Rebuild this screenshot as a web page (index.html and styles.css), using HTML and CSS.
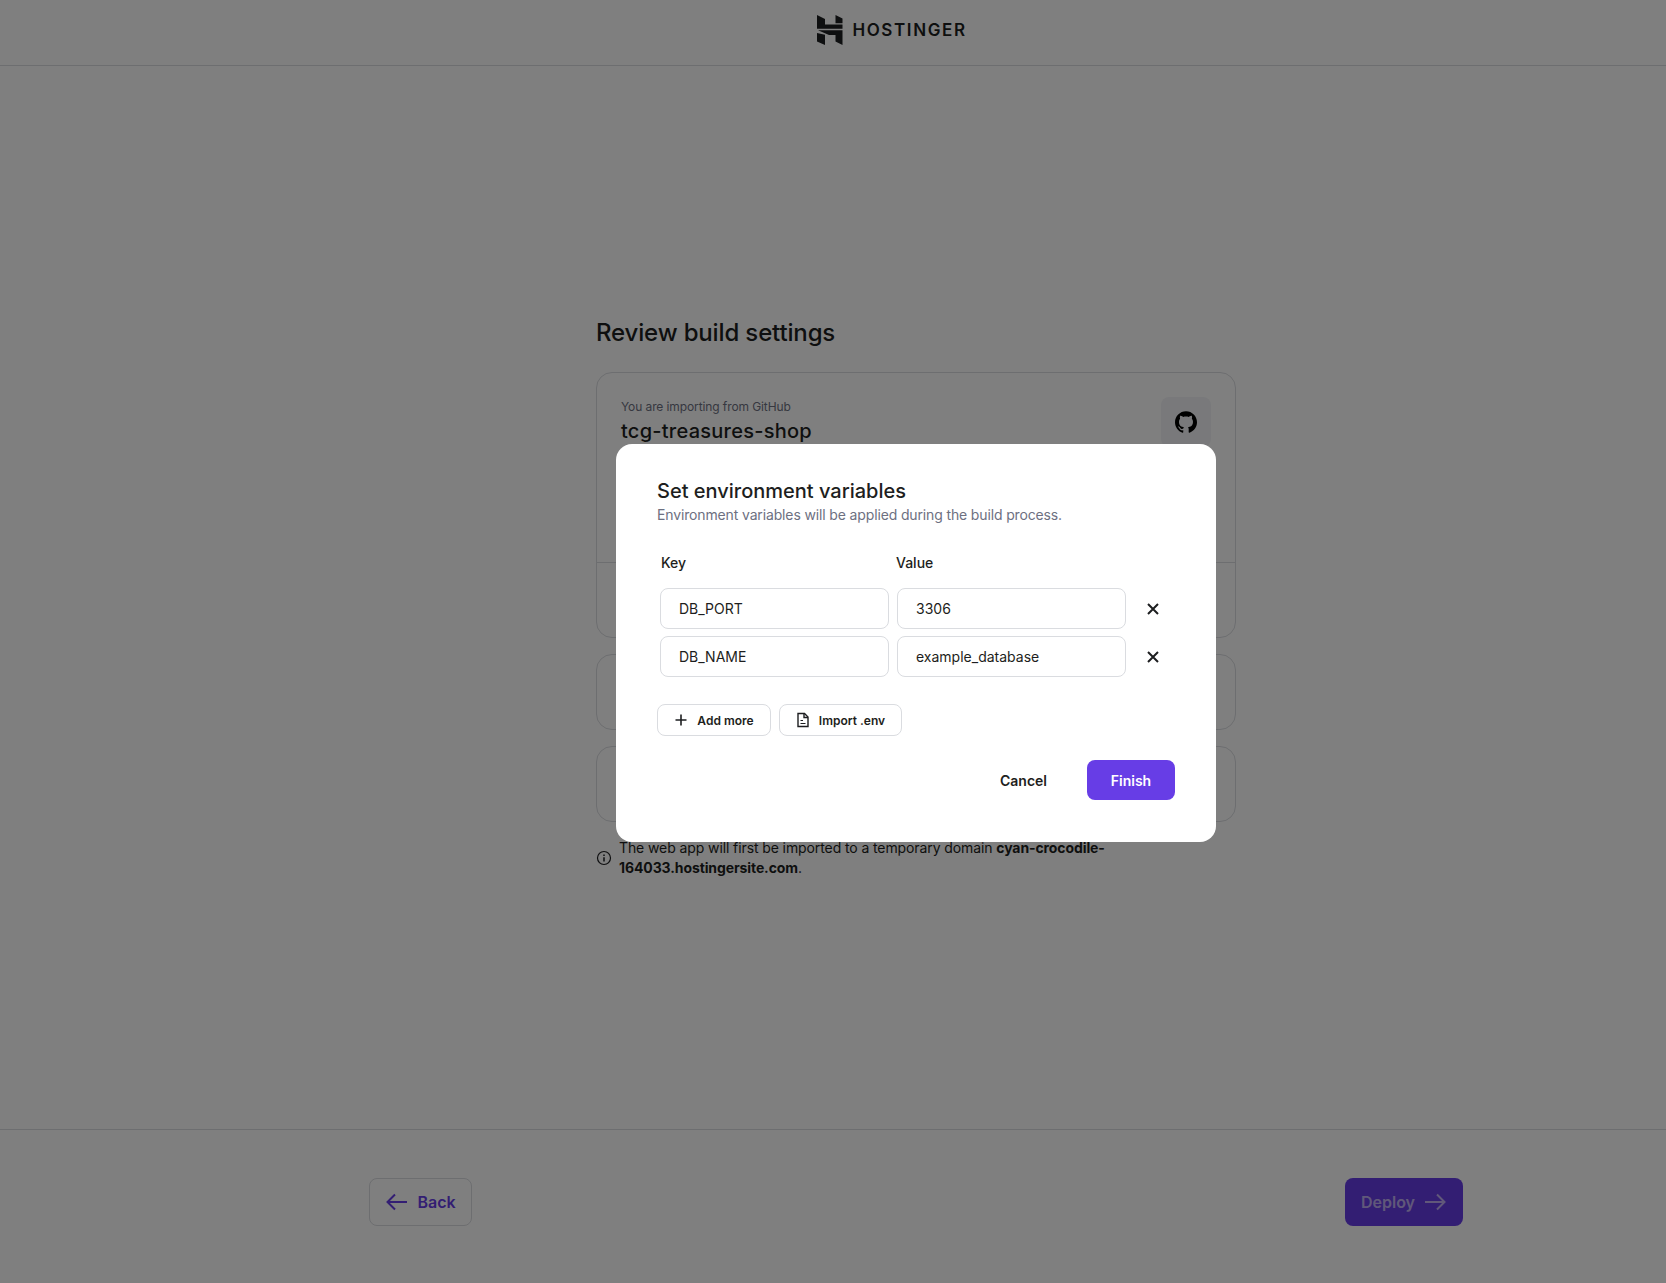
FILE: index.html
```html
<!DOCTYPE html>
<html lang="en">
<head>
    <meta charset="UTF-8">
    <title>Review build settings</title>
    <link rel="stylesheet" href="styles.css">
</head>
<body>
    <div class="page">
        <header class="topbar">
            <div class="logo">
                <svg class="logo-mark" width="26" height="30" viewBox="0 0 26 30">
                    <path d="M0 0L8 4V9.500H25.500V13.800H0Z"/>
                    <path d="M18.500 0L25.500 3.500V8.200H18.500Z"/>
                    <path d="M0 18L8 19.800V30L0 26.500Z"/>
                    <path d="M1 15.300H25.500V30L18.500 26.500V20H12Z"/>
                </svg>
                <span class="logo-text">HOSTINGER</span>
            </div>
        </header>

        <main class="content">
            <div class="column">
                <h1>Review build settings</h1>

                <section class="card">
                    <div class="card-top">
                        <div>
                            <p class="source">You are importing from GitHub</p>
                            <p class="repo">tcg-treasures-shop</p>
                        </div>
                        <div class="github-box">
                            <svg width="22" height="22" viewBox="0 0 24 24">
                                <path d="M12 .297c-6.630 0-12 5.373-12 12 0 5.303 3.438 9.800 8.205 11.385.6.113.82-.258.82-.577 0-.285-.01-1.040-.015-2.040-3.338.724-4.042-1.610-4.042-1.610C4.422 18.070 3.633 17.700 3.633 17.700c-1.087-.744.084-.729.084-.729 1.205.084 1.838 1.236 1.838 1.236 1.070 1.835 2.809 1.305 3.495.998.108-.776.417-1.305.760-1.605-2.665-.300-5.466-1.332-5.466-5.930 0-1.310.465-2.380 1.235-3.220-.135-.303-.540-1.523.105-3.176 0 0 1.005-.322 3.300 1.230.960-.267 1.980-.399 3-.405 1.020.006 2.040.138 3 .405 2.280-1.552 3.285-1.230 3.285-1.230.645 1.653.240 2.873.120 3.176.765.840 1.230 1.910 1.230 3.220 0 4.610-2.805 5.625-5.475 5.920.420.360.810 1.096.810 2.220 0 1.606-.015 2.896-.015 3.286 0 .315.210.690.825.570C20.565 22.092 24 17.592 24 12.297c0-6.627-5.373-12-12-12"/>
                            </svg>
                        </div>
                    </div>
                    <div class="card-bottom"></div>
                </section>
                <section class="card card-small"></section>
                <section class="card card-small"></section>

                <div class="note">
                    <svg class="note-icon" width="16" height="16" viewBox="0 0 16 16" fill="none" stroke="#1d1e20">
                        <circle cx="8" cy="8" r="6.500" stroke-width="1.200"/>
                        <path d="M8 7.200V11.500" stroke-width="1.500"/>
                        <path d="M8 4.500V6" stroke-width="1.500"/>
                    </svg>
                    <p>The web app will first be imported to a temporary domain <b>cyan-crocodile-164033.hostingersite.com</b>.</p>
                </div>
            </div>
        </main>

        <footer class="bottombar">
            <button class="nav-btn back-btn">
                <svg width="24" height="24" viewBox="0 0 24 24" fill="none" stroke="#673de6" stroke-width="2"><path d="M22 12H2.500M10 4.500L2.500 12L10 19.500"/></svg>
                Back
            </button>
            <button class="nav-btn deploy-btn">
                Deploy
                <svg width="24" height="24" viewBox="0 0 24 24" fill="none" stroke="#fff" stroke-opacity=".6" stroke-width="2"><path d="M2 12H21.500M14 4.500L21.500 12L14 19.500"/></svg>
            </button>
        </footer>
    </div>

    <div class="overlay">
        <div class="modal">
            <h2>Set environment variables</h2>
            <p class="modal-sub">Environment variables will be applied during the build process.</p>

            <div class="env-table">
                <div class="env-label">Key</div>
                <div class="env-label">Value</div>
                <div></div>

                <div class="env-input">DB_PORT</div>
                <div class="env-input">3306</div>
                <svg class="env-remove" width="14" height="14" viewBox="0 0 14 14" stroke="#1d1e20" stroke-width="2"><path d="M2 2L12 12M12 2L2 12"/></svg>

                <div class="env-input">DB_NAME</div>
                <div class="env-input">example_database</div>
                <svg class="env-remove" width="14" height="14" viewBox="0 0 14 14" stroke="#1d1e20" stroke-width="2"><path d="M2 2L12 12M12 2L2 12"/></svg>
            </div>

            <div class="env-actions">
                <button class="small-btn add-btn">
                    <svg width="14" height="14" viewBox="0 0 14 14" stroke="#1d1e20" stroke-width="1.600"><path d="M7 1.500V12.500M1.500 7H12.500"/></svg>
                    Add more
                </button>
                <button class="small-btn import-btn">
                    <svg width="14" height="16" viewBox="0 0 14 16" fill="none" stroke="#1d1e20" stroke-width="1.400"><path d="M2 1.500H8.500L12 5V14.500H2Z"/><path d="M8 1.500V5.500H12"/><path d="M4.500 8.500H7M4.500 11.500H9.500" stroke-width="1.200"/></svg>
                    Import .env
                </button>
            </div>

            <div class="modal-actions">
                <button class="cancel-btn">Cancel</button>
                <button class="finish-btn">Finish</button>
            </div>
        </div>
    </div>
</body>
</html>
```

FILE: styles.css
```css
:root {
    --primary-color: #673de6;
    --text-color: #1d1e20;
    --light-text: #6d7081;
    --border-color: #dadce0;
}

* {
    margin: 0;
    padding: 0;
    box-sizing: border-box;
    font-family: Inter, 'Liberation Sans', sans-serif;
}

body {
    background-color: #fff;
    color: var(--text-color);
    height: 1283px;
    overflow: hidden;
}

button {
    border: none;
    background: none;
}

.page {
    height: 1283px;
    display: flex;
    flex-direction: column;
}

/* header */
.topbar {
    height: 66px;
    border-bottom: 1px solid var(--border-color);
    display: flex;
    justify-content: center;
    align-items: center;
    padding: 0 0 5px 118px;
}

.logo {
    display: flex;
    align-items: center;
    gap: 9px;
}

.logo-mark path {
    fill: var(--text-color);
}

.logo-text {
    font-size: 17px;
    font-weight: 600;
    letter-spacing: 1.600px;
}

/* main */
.content {
    flex: 1;
    display: flex;
    justify-content: center;
    align-items: center;
    padding-left: 166px;
}

.column {
    width: 640px;
}

h1 {
    font-size: 24px;
    line-height: 32px;
    font-weight: 500;
    letter-spacing: -0.150px;
    margin-bottom: 23px;
}

.card {
    border: 1px solid var(--border-color);
    border-radius: 16px;
    margin-bottom: 16px;
}

.card-top {
    height: 190px;
    padding: 24px;
    display: flex;
    justify-content: space-between;
    border-bottom: 1px solid var(--border-color);
}

.card-bottom {
    height: 74px;
}

.card-small {
    height: 76px;
}

.source {
    font-size: 12px;
    line-height: 20px;
    letter-spacing: -0.100px;
    color: var(--light-text);
}

.repo {
    font-size: 20px;
    line-height: 28px;
    font-weight: 500;
    letter-spacing: 0.250px;
}

.github-box {
    width: 50px;
    height: 50px;
    border-radius: 8px;
    background-color: #f2f3f6;
    display: flex;
    align-items: center;
    justify-content: center;
}

.note {
    display: flex;
    align-items: center;
    gap: 7px;
    font-size: 14px;
    line-height: 20px;
    letter-spacing: -0.100px;
    margin-top: 15px;
    max-width: 520px;
}

.note-icon {
    flex-shrink: 0;
}

/* footer */
.bottombar {
    height: 154px;
    border-top: 1px solid var(--border-color);
    padding: 48px 0 0 166px;
    display: flex;
    justify-content: center;
    gap: 873px;
    align-items: flex-start;
}

.nav-btn {
    height: 48px;
    border-radius: 8px;
    display: flex;
    align-items: center;
    gap: 8px;
    font-size: 16px;
    font-weight: 600;
}

.back-btn {
    width: 103px;
    justify-content: center;
    color: var(--primary-color);
    border: 1px solid var(--border-color);
}

.deploy-btn {
    width: 118px;
    justify-content: center;
    background-color: var(--primary-color);
    color: rgba(255,255,255,.6);
}

/* modal */
.overlay {
    position: fixed;
    top: 0;
    left: 0;
    width: 100%;
    height: 100%;
    padding: 3px 0 0 166px;
    background-color: rgba(0,0,0,.5);
    display: flex;
    align-items: center;
    justify-content: center;
}

.modal {
    width: 600px;
    height: 398px;
    background-color: #fff;
    border-radius: 16px;
    padding: 33px 41px 32px;
}

h2 {
    font-size: 20px;
    line-height: 28px;
    font-weight: 500;
}

.modal-sub {
    font-size: 14px;
    line-height: 20px;
    letter-spacing: -0.140px;
    color: var(--light-text);
}

.env-table {
    display: grid;
    grid-template-columns: 229px 229px 54px;
    column-gap: 8px;
    row-gap: 7px;
    align-items: center;
    margin: 28px 0 0 3px;
}

.env-label {
    font-size: 14px;
    font-weight: 500;
    line-height: 20px;
    margin: 0 0 8px 1px;
}

.env-label + .env-label {
    margin-left: -1px;
}

.env-input {
    height: 41px;
    border: 1px solid var(--border-color);
    border-radius: 8px;
    padding: 0 18px;
    font-size: 14px;
    line-height: 39px;
}

.env-remove {
    justify-self: center;
    margin-left: -16px;
}

.env-actions {
    display: flex;
    gap: 8px;
    margin-top: 27px;
}

.small-btn {
    height: 32px;
    border: 1px solid var(--border-color);
    border-radius: 8px;
    display: flex;
    align-items: center;
    justify-content: center;
    gap: 9px;
    font-size: 12px;
    font-weight: 600;
    color: var(--text-color);
}

.add-btn {
    width: 114px;
}

.import-btn {
    width: 123px;
}

.modal-actions {
    display: flex;
    justify-content: flex-end;
    align-items: center;
    margin-top: 24px;
}

.cancel-btn {
    font-size: 14px;
    font-weight: 600;
    color: var(--text-color);
    margin-right: 40px;
}

.finish-btn {
    width: 88px;
    height: 40px;
    border-radius: 8px;
    background-color: var(--primary-color);
    color: #fff;
    font-size: 14px;
    font-weight: 600;
}
```
